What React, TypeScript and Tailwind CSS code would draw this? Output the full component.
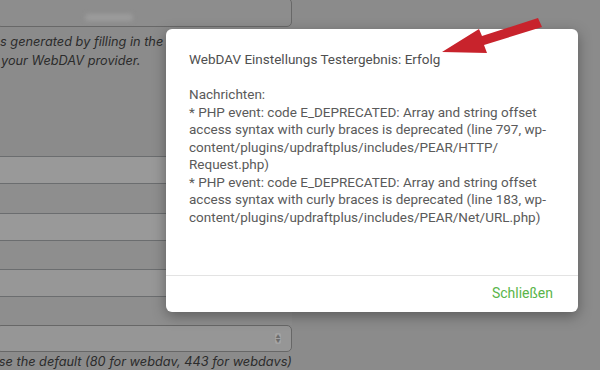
import React from "react";

const rows = [
  { h: "h-[26px]", bg: "bg-[#999999]" },
  { h: "h-[29px]", bg: "bg-[#8e8e8e]" },
  { h: "h-[26px]", bg: "bg-[#999999]" },
  { h: "h-[28px]", bg: "bg-[#8e8e8e]" },
  { h: "h-[26px]", bg: "bg-[#979797]" },
  { h: "h-[28px]", bg: "bg-[#8e8e8e]" },
];

const Arrow = () => (
  <svg
    className="absolute left-0 top-0 pointer-events-none"
    width="600"
    height="370"
    viewBox="0 0 600 370"
  >
    <polygon
      points="442,52 479,29 482,36 538,18 542,27 484,45 487,53"
      fill="#c8232c"
    />
  </svg>
);

export default function App() {
  return (
    <div className="relative w-[600px] h-[370px] overflow-hidden bg-[#8b8b8b] font-['Roboto','Liberation_Sans',sans-serif]">
      {/* page behind the dialog */}
      <div className="w-[292px] flex flex-col font-['Inter','Liberation_Sans',sans-serif]">
        <div className="h-[29px] -mt-[2px] -ml-[4px] rounded-[5px] border border-[#686868] bg-[#8d8d8d] flex items-start pl-[88px] pt-[15px]">
          <div className="w-[48px] h-[7px] rounded-full bg-[#9c9c9c] blur-[2px]" />
        </div>
        <div className="mt-[5px] text-[12.75px] leading-[19px] italic text-[#2c2c2c] whitespace-nowrap">
          <p>s generated by filling in the connection</p>
          <p className="pl-[1px]">your WebDAV provider.</p>
        </div>
        <div className="mt-[86px] flex flex-col">
          {rows.map((r, i) => (
            <div
              key={i}
              className={`${r.h} ${r.bg} border-t border-[#6b6d6f] box-content`}
            />
          ))}
        </div>
        <div className="h-[27px] -ml-[4px] rounded-[5px] border border-[#676767] bg-[#969696] flex items-center justify-end pr-[10px]">
          <div className="flex flex-col items-center justify-center w-[6px] h-[11px] rounded-[2px] bg-[#a3a3a3] text-[#6c6c6c] text-[5px] leading-[5px]">
            <span>▲</span>
            <span>▼</span>
          </div>
        </div>
        <div className="mt-[1px] flex justify-end overflow-hidden">
          <p className="shrink-0 text-[12.75px] leading-[17px] italic text-[#2c2c2c] whitespace-nowrap">
            Please leave blank to use the default (80 for webdav, 443 for webdavs)
          </p>
        </div>
      </div>

      {/* dialog */}
      <div className="absolute left-[166px] top-[29px] w-[412px] h-[283px] bg-white rounded-[6px] shadow-[0_4px_14px_rgba(0,0,0,0.35)] flex flex-col">
        <div className="h-[246px] pt-[22px] px-[23px] text-[13.5px] leading-[17.5px] text-[#5a5a5a] whitespace-nowrap">
          <p className="text-[#4f4f4f]">WebDAV Einstellungs Testergebnis: Erfolg</p>
          <br />
          <p>Nachrichten:</p>
          <p>
            * PHP event: code E_DEPRECATED: Array and string offset
            <br />
            access syntax with curly braces is deprecated (line 797, wp-
            <br />
            content/plugins/updraftplus/includes/PEAR/HTTP/
            <br />
            Request.php)
          </p>
          <p>
            * PHP event: code E_DEPRECATED: Array and string offset
            <br />
            access syntax with curly braces is deprecated (line 183, wp-
            <br />
            content/plugins/updraftplus/includes/PEAR/Net/URL.php)
          </p>
        </div>
        <div className="flex-1 border-t border-[#e3e3e3] flex items-center justify-end pr-[25px] pb-[1px]">
          <span className="text-[14px] text-[#5ab54a]">Schließen</span>
        </div>
      </div>

      <Arrow />
    </div>
  );
}
